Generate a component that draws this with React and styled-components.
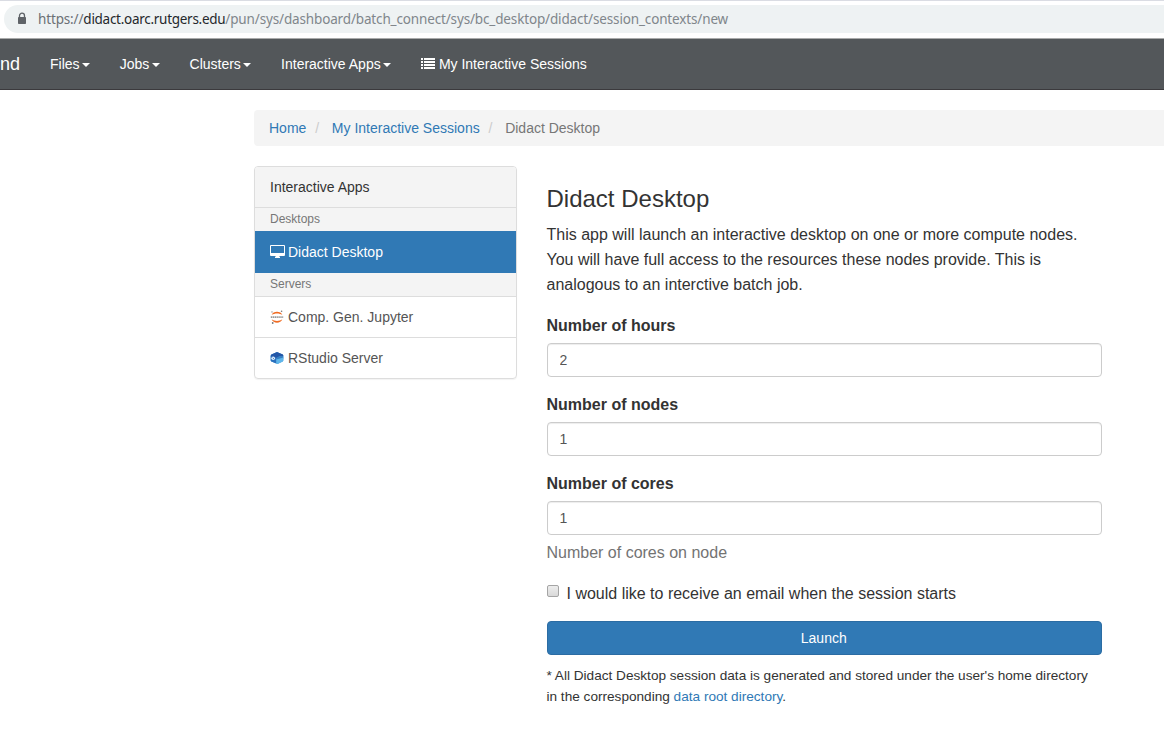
import React from "react";
import styled, { createGlobalStyle, css } from "styled-components";

const Global = createGlobalStyle`
  *, *::before, *::after { box-sizing: border-box; }
  html, body { margin: 0; background: #fff; overflow: hidden; }
  body {
    font-family: "Liberation Sans", Arial, sans-serif;
    font-size: 14px;
    line-height: 20px;
    color: #333;
  }
  a { color: #3079b5; text-decoration: none; }
`;

const Page = styled.div`
  width: 1164px;
  height: 730px;
  overflow: hidden;
`;

const BrowserBar = styled.div`
  height: 39px;
  padding: 4px 0 5px 4px;
  border-top: 1px solid #dadce3;
  border-bottom: 1px solid #a9aaaa;
  background: #fff;
`;

const AddressField = styled.div`
  display: flex;
  align-items: center;
  height: 28px;
  padding-left: 13px;
  border-radius: 14px 0 0 14px;
  background: #eef2f3;
`;

const Url = styled.span`
  margin-left: 11px;
  font-family: "Noto Sans", sans-serif;
  font-size: 13.5px;
  letter-spacing: -0.147px;
  line-height: 20px;
  color: #80868b;
  white-space: nowrap;
`;
const Scheme = styled.span`
  color: #6b7075;
`;
const Host = styled.span`
  color: #25282c;
  letter-spacing: -0.28px;
`;

const Navbar = styled.nav`
  display: flex;
  align-items: center;
  height: 51px;
  background: #53575a;
  border-bottom: 1px solid #3b3a3d;
  color: #fff;
`;
const Brand = styled.span`
  width: 35px;
  font-size: 18px;
`;
const NavItem = styled.a`
  display: flex;
  align-items: center;
  padding: 0 15px;
  color: #fff;
  white-space: nowrap;
`;
const Caret = styled.span`
  width: 8px;
  height: 4px;
  margin: 2px 0 0 2.2px;
  border-top: 4px solid currentColor;
  border-left: 4px solid transparent;
  border-right: 4px solid transparent;
`;

const Content = styled.main`
  margin-left: 254px;
  padding-top: 20px;
`;
const Breadcrumb = styled.div`
  display: flex;
  height: 36px;
  padding: 8px 15px;
  border-radius: 4px 0 0 4px;
  background: #f4f4f4;
  color: #777;
`;
const Separator = styled.span`
  padding: 0 12.7px 0 8.9px;
  color: #ccc;
`;
const Columns = styled.div`
  display: flex;
  align-items: flex-start;
  margin-top: 20px;
`;

const Panel = styled.aside`
  width: 263px;
  border: 1px solid #ddd;
  border-radius: 4px;
  box-shadow: 0 1px 1px rgba(0, 0, 0, 0.05);
  overflow: hidden;
`;
const PanelHeading = styled.div`
  height: 41px;
  padding: 10px 15px;
  background: #f4f4f4;
  border-bottom: 1px solid #ddd;
`;
const GroupLabel = styled.div`
  height: 23px;
  padding: 3px 15px;
  background: #f4f4f4;
  color: #777;
  font-size: 12px;
  line-height: 17px;
`;
const AppLink = styled.a`
  display: flex;
  align-items: center;
  height: 41px;
  padding: 0 15px;
  border-top: 1px solid #ddd;
  color: #555;
  ${(p) =>
    p.$active &&
    css`
      height: 42px;
      padding-bottom: 1px;
      border-top-color: #3079b5;
      background: #3079b5;
      color: #fff;
    `}
`;
const AppIcon = styled.span`
  display: flex;
  align-items: center;
  width: 18px;
  height: 20px;
`;

const Form = styled.form`
  width: 555.5px;
  margin-left: 29.5px;
  padding-top: 20px;
  font-size: 16px;
  line-height: 25px;
`;
const Title = styled.h3`
  margin: 0 0 10px;
  font-size: 24px;
  font-weight: 400;
  line-height: 26px;
`;
const Intro = styled.p`
  margin: 0 0 16px;
`;
const Field = styled.div`
  margin-bottom: 15px;
`;
const Label = styled.label`
  display: block;
  height: 30px;
  font-weight: 700;
`;
const Input = styled.input`
  display: block;
  width: 100%;
  height: 34px;
  padding: 6px 12px;
  border: 1px solid #ccc;
  border-radius: 4px;
  background: #fff;
  box-shadow: inset 0 1px 1px rgba(0, 0, 0, 0.075);
  color: #555;
  font: 14px/20px "Liberation Sans", Arial, sans-serif;
  outline: none;
`;
const Help = styled.div`
  margin-top: 5px;
  color: #737373;
`;
const CheckRow = styled.label`
  display: flex;
  height: 25px;
  margin-top: 16px;
`;
const Checkbox = styled.input`
  appearance: none;
  width: 12px;
  height: 12px;
  margin: 4px 7.500px 0 0.5px;
  border: 1px solid #a5a5a5;
  border-radius: 2px;
  background: linear-gradient(#ededed, #d9d9d9);
`;
const LaunchButton = styled.button`
  display: block;
  width: 100%;
  height: 34px;
  margin-top: 15px;
  padding: 0 7px 0 6px;
  border: 1px solid #2b6ca3;
  border-radius: 4px;
  background: #3079b5;
  color: #fff;
  font: 14px/20px "Liberation Sans", Arial, sans-serif;
`;
const Footnote = styled.p`
  margin: 10px 0 0;
  font-size: 13.62px;
  line-height: 21px;
`;

const ListGlyph = styled.svg`
  margin-right: 4px;
`;

const LockIcon = () => (
  <svg width="10" height="14" viewBox="0 0 10 14">
    <path d="M2.5 6V3.700a2.500 2.500 0 0 1 5 0V6" fill="none" stroke="#5f6368" strokeWidth="1.3" />
    <rect x="1" y="5" width="8" height="7" rx="0.8" fill="#5f6368" />
  </svg>
);

const ListIcon = () => (
  <ListGlyph width="14" height="12" viewBox="0 0 14 12" fill="#fff" shapeRendering="crispEdges">
    <path d="M0 0h2v2H0zM3 0h11v2H3zM0 3h2v2H0zM3 3h11v2H3zM0 6h2v2H0zM3 6h11v2H3zM0 9h2v2H0zM3 9h11v2H3z" />
  </ListGlyph>
);

const DesktopIcon = () => (
  <svg width="15" height="14" viewBox="0 0 15 14" fill="#fff">
    <path
      fillRule="evenodd"
      d="M1 0h13a1 1 0 0 1 1 1v9a1 1 0 0 1-1 1H9.500v1h.5v1H5v-1h.5v-1H1a1 1 0 0 1-1-1V1a1 1 0 0 1 1-1zM1 1v7h13V1z"
    />
  </svg>
);

const JupyterIcon = () => (
  <svg width="14" height="14" viewBox="0 0 14 14">
    <path d="M1.700 4.900C3 .6 11 .6 12.300 4.900 9.500 2.900 4.500 2.900 1.700 4.900z" fill="#f06c24" />
    <path d="M1.700 9.300C3 13.800 11 13.800 12.300 9.300 9.500 11.600 4.500 11.600 1.700 9.300z" fill="#f06c24" />
    <path d="M.8 7.100h12.400" stroke="#999" strokeWidth="1.800" strokeDasharray="1.400 .5" />
    <circle cx="11.600" cy="1.300" r=".8" fill="#767677" />
    <circle cx="2" cy="1.900" r=".6" fill="#767677" />
    <circle cx="2.700" cy="13" r=".9" fill="#767677" />
  </svg>
);

const RStudioIcon = () => (
  <svg width="14" height="14" viewBox="0 0 14 14">
    <path d="M7 1.100 12.700 3.500Q13.300 3.800 13.300 4.500v5Q13.300 10.200 12.700 10.500L7.500 13 1.400 10.500Q.7 10.200.7 9.500v-5Q.7 3.800 1.400 3.500z" fill="#449bd7" />
    <path d="M7 1.100 12.900 3.600Q13.300 4 13.300 5L10 5.300 6.500 7.200.8 5.600V4.500Q.8 3.800 1.400 3.500z" fill="#2457a7" />
    <path d="M.7 5 6.300 6.500v6L1.400 10.500Q.7 10.200.7 9.500z" fill="#2b70bd" />
    <path d="M6.300 6.800 9.500 5 13.300 5v2.500L7.500 9.800z" fill="#367fc3" />
    <path d="M6.300 8.500 13.300 6.500v3Q13.300 10.200 12.700 10.500L7.500 13 6.300 12.500z" fill="#60b6ea" />
    <circle cx="3.200" cy="7.300" r="1.800" fill="#e8f3fc" />
    <path d="m2.900 6.700.9 1.400" stroke="#2867b2" strokeWidth=".8" />
  </svg>
);

const menus = ["Files", "Jobs", "Clusters", "Interactive Apps"];
const fields = [
  { label: "Number of hours", value: "2" },
  { label: "Number of nodes", value: "1" },
  { label: "Number of cores", value: "1", help: "Number of cores on node" },
];

export default function App() {
  return (
    <Page>
      <Global />
      <BrowserBar>
        <AddressField>
          <LockIcon />
          <Url>
            <Scheme>https://</Scheme>
            <Host>didact.oarc.rutgers.edu</Host>
            /pun/sys/dashboard/batch_connect/sys/bc_desktop/didact/session_contexts/new
          </Url>
        </AddressField>
      </BrowserBar>
      <Navbar>
        <Brand>nd</Brand>
        {menus.map((name) => (
          <NavItem key={name}>
            {name}
            <Caret />
          </NavItem>
        ))}
        <NavItem>
          <ListIcon />
          My Interactive Sessions
        </NavItem>
      </Navbar>
      <Content>
        <Breadcrumb>
          <a>Home</a>
          <Separator>/</Separator>
          <a>My Interactive Sessions</a>
          <Separator>/</Separator>
          <span>Didact Desktop</span>
        </Breadcrumb>
        <Columns>
          <Panel>
            <PanelHeading>Interactive Apps</PanelHeading>
            <GroupLabel>Desktops</GroupLabel>
            <AppLink $active>
              <AppIcon><DesktopIcon /></AppIcon>
              Didact Desktop
            </AppLink>
            <GroupLabel>Servers</GroupLabel>
            <AppLink>
              <AppIcon><JupyterIcon /></AppIcon>
              Comp. Gen. Jupyter
            </AppLink>
            <AppLink>
              <AppIcon><RStudioIcon /></AppIcon>
              RStudio Server
            </AppLink>
          </Panel>
          <Form>
            <Title>Didact Desktop</Title>
            <Intro>
              This app will launch an interactive desktop on one or more compute nodes.
              <br />
              You will have full access to the resources these nodes provide. This is
              <br />
              analogous to an interctive batch job.
            </Intro>
            {fields.map((f) => (
              <Field key={f.label}>
                <Label>{f.label}</Label>
                <Input defaultValue={f.value} />
                {f.help && <Help>{f.help}</Help>}
              </Field>
            ))}
            <CheckRow>
              <Checkbox type="checkbox" />
              I would like to receive an email when the session starts
            </CheckRow>
            <LaunchButton type="button">Launch</LaunchButton>
            <Footnote>
              * All Didact Desktop session data is generated and stored under the user's home directory
              <br />
              in the corresponding <a>data root directory</a>.
            </Footnote>
          </Form>
        </Columns>
      </Content>
    </Page>
  );
}
